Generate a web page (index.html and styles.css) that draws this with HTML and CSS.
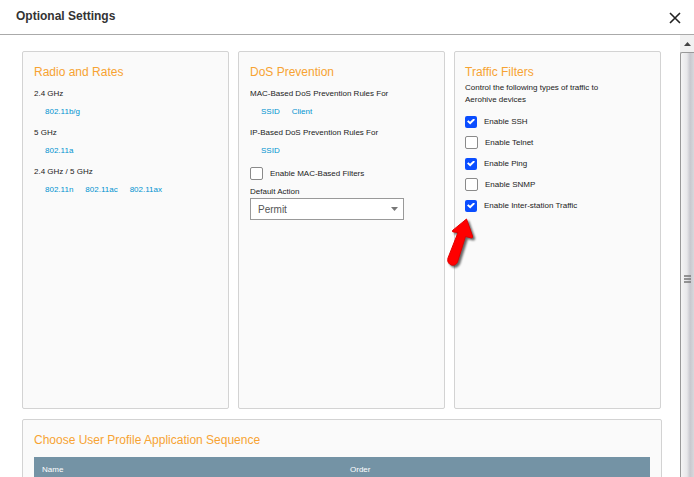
FILE: index.html
```html
<!DOCTYPE html>
<html lang="en">
<head>
<meta charset="utf-8">
<title>Optional Settings</title>
<link rel="stylesheet" href="styles.css">
</head>
<body>
<div class="dialog">
  <header class="dialog-header">
    <h1>Optional Settings</h1>
    <button class="close" type="button" aria-label="Close">
      <svg width="12" height="12" viewBox="0 0 12 12"><path d="M1 1 11 11M11 1 1 11" fill="none" stroke="#222" stroke-width="1.6"/></svg>
    </button>
  </header>
  <div class="dialog-body">
    <main class="content">
      <div class="cards">
        <section class="card">
          <h2>Radio and Rates</h2>
          <h3>2.4 GHz</h3>
          <div class="links"><a href="#">802.11b/g</a></div>
          <h3>5 GHz</h3>
          <div class="links"><a href="#">802.11a</a></div>
          <h3>2.4 GHz / 5 GHz</h3>
          <div class="links"><a href="#">802.11n</a><a href="#">802.11ac</a><a href="#">802.11ax</a></div>
        </section>
        <section class="card">
          <h2>DoS Prevention</h2>
          <h3>MAC-Based DoS Prevention Rules For</h3>
          <div class="links"><a href="#">SSID</a><a href="#">Client</a></div>
          <h3>IP-Based DoS Prevention Rules For</h3>
          <div class="links"><a href="#">SSID</a></div>
          <label class="check"><input type="checkbox">Enable MAC-Based Filters</label>
          <label class="field-label" for="action">Default Action</label>
          <div class="select">
            <select id="action"><option>Permit</option></select>
            <svg class="caret" width="7" height="4" viewBox="0 0 7 4"><path d="M0 0H7L3.5 4Z" fill="#777"/></svg>
          </div>
        </section>
        <section class="card filters">
          <h2>Traffic Filters</h2>
          <p>Control the following types of traffic to Aerohive devices</p>
          <label class="check"><input type="checkbox" checked>Enable SSH</label>
          <label class="check"><input type="checkbox">Enable Telnet</label>
          <label class="check"><input type="checkbox" checked>Enable Ping</label>
          <label class="check"><input type="checkbox">Enable SNMP</label>
          <div class="callout">
            <label class="check"><input type="checkbox" checked>Enable Inter-station Traffic</label>
            <svg class="pointer" width="36" height="58" viewBox="0 0 36 58">
              <path d="M21.5 7 7.500 18.500Q7 20 8.500 20L13 20.500 3 46C1 53 10 56 12.500 50L20.500 24.500 26.500 26Q28 26 27.500 24Z" fill="#f00" stroke="#e00000" stroke-width="1" stroke-linejoin="round"/>
            </svg>
          </div>
        </section>
      </div>
      <section class="card sequence">
        <h2>Choose User Profile Application Sequence</h2>
        <table>
          <thead><tr><th>Name</th><th>Order</th></tr></thead>
        </table>
      </section>
    </main>
    <div class="scrollbar" aria-hidden="true">
      <div class="scroll-up"><svg width="7" height="4" viewBox="0 0 7 4"><path d="M0 4 3.500 0 7 4Z" fill="#444"/></svg></div>
      <div class="scroll-thumb"><svg width="7" height="8" viewBox="0 0 7 8"><path d="M0 1H7M0 4H7M0 7H7" stroke="#777" stroke-width="1.500"/></svg></div>
    </div>
  </div>
</div>
</body>
</html>
```
FILE: styles.css
```css
* { box-sizing: border-box; }
body {
  margin: 0;
  background: #fff;
  color: #222;
  font: 8px/12px "Liberation Sans", Arial, sans-serif;
}
h1, h2, h3, p { margin: 0; }
.dialog {
  display: flex;
  flex-direction: column;
  height: 100vh;
  overflow: hidden;
}
.dialog-header {
  display: flex;
  flex: none;
  align-items: center;
  justify-content: space-between;
  padding: 0 13px 2px 16px;
  height: 35px;
  border-bottom: 1px solid #aaa;
}
h1 { color: #333; font-size: 12px; line-height: 16px; }
.close {
  display: flex;
  padding: 4px 0 0;
  border: 0;
  background: none;
}
.dialog-body {
  display: flex;
  flex: 1;
  min-height: 0;
}
.content {
  flex: 1;
  padding: 16px 18px 0 22px;
  overflow: hidden;
}
.cards {
  display: grid;
  grid-template-columns: repeat(3, 1fr);
  gap: 9px;
  margin: 0 1px 10px 0;
}
.card {
  padding: 12px 11px;
  min-height: 358px;
  border: 1px solid #d3d3d3;
  border-radius: 2px;
  background: #fafafa;
}
h2 {
  color: #f7a332;
  font-size: 12px;
  font-weight: normal;
  line-height: 16px;
}
h3 {
  margin-top: 8px;
  font-size: 8px;
  font-weight: normal;
  line-height: 12px;
}
.links {
  display: flex;
  gap: 12px;
  margin: 6px 0 9px 11px;
}
.links + h3 { margin-top: 0; }
.links:has(+ .check) { margin-bottom: 6px; }
a { color: #0093d0; text-decoration: none; }
.check {
  display: flex;
  align-items: center;
  gap: 7px;
  height: 21px;
}
.check input {
  appearance: none;
  margin: 0;
  width: 13px;
  height: 13px;
  border: 1px solid #8a8a8a;
  border-radius: 2px;
  background: #fff;
}
.check input:checked {
  display: grid;
  place-items: center;
  width: 12px;
  height: 12px;
  border: 0;
  background: #0a4dff;
}
.check input:checked::after {
  content: "";
  width: 8px;
  height: 6px;
  background: #fff;
  clip-path: polygon(0 50%, 18% 28%, 38% 54%, 82% 0, 100% 22%, 40% 100%);
}
.field-label {
  display: block;
  margin-top: 2px;
}
.select {
  position: relative;
  margin-right: 29px;
}
select {
  appearance: none;
  display: block;
  width: 100%;
  height: 22px;
  padding: 0 7px;
  border: 1px solid #999;
  border-radius: 0;
  background: #fff;
  color: #555;
  font: 10px "Liberation Sans", Arial, sans-serif;
}
.caret {
  position: absolute;
  top: 9px;
  right: 6px;
  pointer-events: none;
}
.filters { padding-left: 10px; }
.filters p {
  margin: 2px 0 5px;
  max-width: 140px;
}
.callout { position: relative; }
.pointer {
  position: absolute;
  top: 17px;
  left: -20px;
  filter: drop-shadow(2px 2px 1px #0009);
}
.sequence { min-height: 120px; }
table {
  margin-top: 9px;
  width: 100%;
  border-collapse: collapse;
  table-layout: fixed;
  background: #7493a5;
  color: #fff;
}
th {
  height: 26px;
  padding: 0 8px;
  font-weight: normal;
  text-align: left;
}
.scrollbar {
  display: flex;
  flex: none;
  flex-direction: column;
  width: 14px;
  background: #f1f1f1;
}
.scroll-up {
  display: flex;
  flex: none;
  align-items: center;
  justify-content: center;
  height: 17px;
}
.scroll-thumb {
  display: flex;
  flex: none;
  align-items: center;
  justify-content: center;
  height: 454px;
  border: 1px solid #999;
  border-right: 0;
  border-radius: 2px 0 0 2px;
  background: linear-gradient(90deg, #f5f5f5, #e8e8ea 45%, #c8c8ce 70%, #d8d8dc);
}
```
